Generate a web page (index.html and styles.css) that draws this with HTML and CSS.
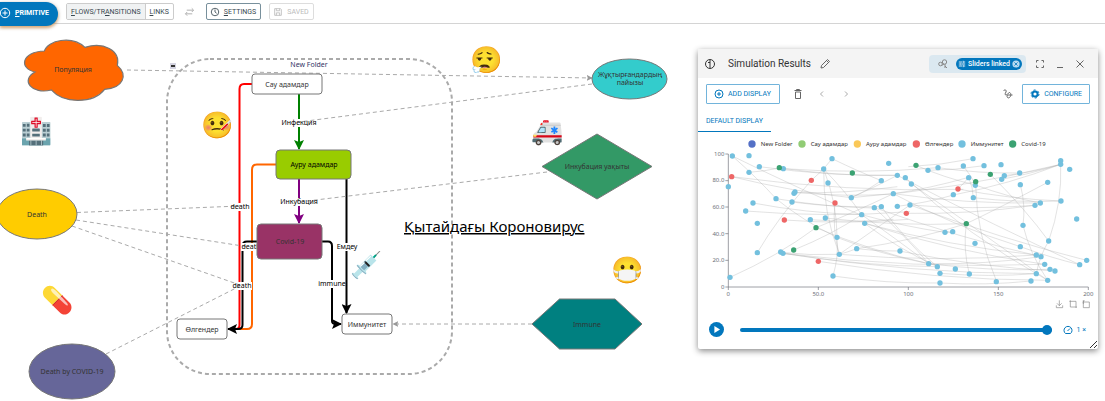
FILE: index.html
```html
<!DOCTYPE html>
<html lang="kk">
<head>
<meta charset="utf-8">
<title>Қытайдағы Короновирус</title>
<link rel="stylesheet" href="styles.css">
</head>
<body>
<header class="topbar">
  <button class="primitive"><svg class="ico" viewBox="0 0 12 12"><circle cx="5" cy="6" r="4.700"/><path d="M5 3.500v5M2.500 6h5"/></svg><span><u>P</u>RIMITIVE</span></button>
  <div class="group">
    <button class="seg seg-on"><u>F</u>LOWS/TR<u>A</u>NSITIONS</button><button class="seg"><u>L</u>INKS</button>
  </div>
  <button class="swap" aria-label="Reverse"><svg viewBox="0 0 12 10"><path d="M3 3h7M8.500 1l2 2-2 2M9 7H2M3.500 5l-2 2 2 2"/></svg></button>
  <button class="box"><svg class="ico" viewBox="0 0 12 12"><circle cx="6" cy="6" r="4.500"/><path d="M6 3v3l2 1.500"/></svg><span><u>S</u>ETTINGS</span></button>
  <button class="box saved" disabled><svg class="ico" viewBox="0 0 12 12"><path d="M2 2h7l1 1v7H2zM4 2v2.500h4V2M4 10V7h4v3"/></svg><span>SAVED</span></button>
</header>
<main class="canvas">
  <svg class="diagram" role="img" aria-label="Model diagram">
    <defs>
      <marker id="a-black" viewBox="0 0 10 10" refX="9" refY="5" markerWidth="10" markerHeight="10" markerUnits="userSpaceOnUse" orient="auto"><path d="M0 0L10 5L0 10L2 5z"/></marker>
      <marker id="a-green" viewBox="0 0 10 10" refX="9" refY="5" markerWidth="10" markerHeight="10" markerUnits="userSpaceOnUse" orient="auto"><path d="M0 0L10 5L0 10L2 5z" fill="#008000"/></marker>
      <marker id="a-purple" viewBox="0 0 10 10" refX="9" refY="5" markerWidth="10" markerHeight="10" markerUnits="userSpaceOnUse" orient="auto"><path d="M0 0L10 5L0 10L2 5z" fill="#800080"/></marker>
      <marker id="a-gray" viewBox="0 0 10 10" refX="9" refY="5" markerWidth="6" markerHeight="6" markerUnits="userSpaceOnUse" orient="auto"><path d="M0 0L10 5L0 10L2 5z" fill="#999"/></marker>
    </defs>
    <g transform="translate(0 -24)">
      <rect class="folder" x="167" y="59" width="285" height="315" rx="43"/>
      <rect x="170" y="63" width="6" height="6" fill="#d5d5e2"/><path d="M171 66h4" stroke="#333" stroke-width="2"/>
      <text class="t folder-name" x="309" y="67">New Folder</text>

      <path class="flow" stroke="#f00" d="M252 84H244Q239.500 84 239.500 89V325Q239.500 329 236 329H232"/>
      <path class="flow" stroke="#f60" d="M276 164.500H257Q252 164.500 252 170V324Q252 329 247 329H232"/>
      <path class="flow" stroke="#008000" marker-end="url(#a-green)" d="M299 94V149"/>
      <path class="flow" stroke="#800080" marker-end="url(#a-purple)" d="M299 179V223"/>
      <path class="flow" stroke="#000" marker-end="url(#a-black)" d="M346.500 179V313"/>
      <path class="flow" stroke="#000" marker-end="url(#a-black)" d="M257 241.500H247Q242.500 241.500 242.500 246V325Q242.500 329 238 329H228"/>
      <path class="flow" stroke="#000" marker-end="url(#a-black)" d="M322 241.500H328Q332 241.500 332 246V321Q332 324 336 324H341"/>
      <g fill="#fff"><rect x="230" y="203" width="19" height="8"/><rect x="241" y="243" width="18" height="8"/><rect x="233" y="282" width="19" height="8"/><rect x="320" y="280" width="24" height="8"/><rect x="336" y="243" width="21" height="8"/><rect x="281" y="119" width="36" height="8"/><rect x="281" y="198" width="36" height="8"/></g>
      <g class="links">
        <path marker-end="url(#a-gray)" d="M127 70L592 78"/><path d="M592 84L299 122"/><path d="M547 172L299 202"/>
        <path d="M77 212.500L240 206"/><path d="M76 220L249 247"/><path d="M72 226L240 285"/><path d="M106 354L240 286"/>
        <path marker-end="url(#a-gray)" d="M532 324H393"/>
      </g>
      <g class="t label"><text x="240" y="209">death</text><text x="251" y="249">death</text><text x="242" y="288">death</text><text x="332" y="286">immune</text><text x="347" y="249">Емдеу</text><text x="299" y="125">Инфекция</text><text x="299" y="204">Инкубация</text></g>

      <g class="shape">
        <path fill="#f60" stroke-width="3.500" transform="scale(.3333)" d="M133 153C143 121 215 105 255 142C310 125 362 150 352 196C385 225 370 265 314 268C280 312 190 312 154 270C95 285 60 240 105 216C55 205 65 155 133 153Z"/>
        <ellipse fill="#fc0" cx="37" cy="214" rx="40" ry="25"/>
        <ellipse fill="#669" cx="72" cy="371.500" rx="43" ry="27.500"/>
        <ellipse fill="#3cc" cx="629.500" cy="79" rx="37.500" ry="20"/>
        <path fill="#396" d="M542 166.500L597 134L652 166.500L597 199Z"/>
        <path fill="#008080" d="M532 324L559.500 299H615L642 324L615 349H559.500Z"/>
        <rect fill="#fff" x="252" y="74" width="70" height="20" rx="3"/>
        <rect fill="#9c0" x="276" y="150" width="75" height="29" rx="4"/>
        <rect fill="#936" x="257" y="224" width="65" height="35" rx="4"/>
        <rect fill="#fff" x="177" y="319" width="50" height="20" rx="3"/>
        <rect fill="#fff" x="342" y="314" width="50" height="20" rx="3"/>
      </g>
      <g class="t"><text x="73" y="72">Популяция</text><text x="37" y="217">Death</text><text x="72" y="374">Death by COVID-19</text><text x="630" y="77">Жұқтырғандардың</text><text x="630" y="85">пайызы</text><text x="597" y="169">Инкубация уақыты</text><text x="587" y="327">Immune</text><text x="287" y="87">Сау адамдар</text><text class="dark" x="314" y="167">Ауру адамдар</text><text x="290" y="244">Covid-19</text><text x="202" y="332">Өлгендер</text><text x="367" y="327">Иммунитет</text></g>
      <text class="headline" x="404" y="232">Қытайдағы Короновирус</text>
      <g class="emoji"><text x="37" y="140">🏥</text><text x="218" y="134">🤒</text><text x="487" y="69">😮‍💨</text><text x="548" y="140">🚑</text><text x="58" y="309">💊</text><text x="367" y="274">💉</text><text x="628" y="279">😷</text></g>
    </g>
  </svg>

  <section class="panel">
    <div class="panel-head">
      <svg class="ico" viewBox="0 0 12 12"><circle cx="6" cy="6" r="4.500"/><path d="M4 4.500h2M6 2v8"/></svg>
      <h2>Simulation Results</h2>
      <button class="bare" aria-label="Rename"><svg class="ico" viewBox="0 0 12 12"><path d="M2 10l.5-2.500 6-6 2 2-6 6zM7.500 2.500l2 2"/></svg></button>
      <div class="linked"><svg class="ico" viewBox="0 0 12 12"><circle cx="7.500" cy="4" r="2.200"/><circle cx="3.500" cy="6" r="1.800"/><path d="M8 6v4M8 8l2 2M4.500 7.500L7 6"/></svg>
        <button class="chip"><svg viewBox="0 0 10 10"><path d="M1 2.500h4M7 2.500h2M6.500 1v3M1 5h1.500M4.500 5H9M3.500 3.500v3M1 7.500h4M7 7.500h2M6.500 6v3"/></svg><span>Sliders linked</span><svg viewBox="0 0 10 10"><circle cx="5" cy="5" r="4.500" fill="#b9dcf2" stroke="none"/><path stroke="#0277bd" d="M3 3l4 4M7 3l-4 4"/></svg></button></div>
      <button class="bare" aria-label="Full screen"><svg class="ico" viewBox="0 0 12 12"><path d="M2.500 4.500v-2h2M7.500 2.500h2v2M9.500 7.500v2h-2M4.500 9.500h-2v-2"/></svg></button>
      <button class="bare" aria-label="Minimize"><svg class="ico" viewBox="0 0 12 12"><path d="M3 9.500h6"/></svg></button>
      <button class="bare" aria-label="Close"><svg class="ico" viewBox="0 0 12 12"><path d="M2.500 2.500l7 7M9.500 2.500l-7 7"/></svg></button>
    </div>
    <div class="tools">
      <button class="outline"><svg class="ico" viewBox="0 0 12 12"><circle cx="5" cy="6" r="4"/><path d="M5 4v4M3 6h4"/></svg>ADD DISPLAY</button>
      <button class="bare" aria-label="Delete"><svg class="ico" viewBox="0 0 12 12"><path d="M2.500 2.500h7M4.500 2V1.500h3V2M3.500 4v6.500h5V4z"/></svg></button>
      <button class="bare faint" aria-label="Previous"><svg class="ico" viewBox="0 0 12 12"><path d="M7 3.500L4.500 6 7 8.500"/></svg></button>
      <button class="bare faint" aria-label="Next"><svg class="ico" viewBox="0 0 12 12"><path d="M5 3.500L7.500 6 5 8.500"/></svg></button>
      <button class="bare push" aria-label="Trace"><svg class="ico" viewBox="0 0 12 12"><path d="M1.500 3C2.500 1 5 2 4 4S2.500 6.500 4 7 6 4.500 7.500 4.500 9.500 8 7.500 9.500 4 8 6 7H10.500"/></svg></button>
      <button class="outline configure"><svg class="ico" viewBox="0 0 12 12"><circle cx="6" cy="6" r="4" stroke-dasharray="2.200 2"/><circle cx="6" cy="6" r="2.600" stroke-width="2"/></svg>CONFIGURE</button>
    </div>
    <div class="tabs"><button class="tab">DEFAULT DISPLAY</button></div>
    <svg class="chart" viewBox="24 6 1200 534" role="img" aria-label="Scatter chart">
      <g id="legend"></g>
      <path class="axis" d="M115 72V471H1195M106 72h9M106 152h9M106 231h9M106 311h9M106 391h9M106 471h9M115 471v9M385 471v9M655 471v9M925 471v9M1195 471v9"/>
      <g class="ticks" text-anchor="end"><text x="103" y="78">100</text><text x="103" y="157">80.0</text><text x="103" y="237">60.0</text><text x="103" y="317">40.0</text><text x="103" y="397">20.0</text><text x="103" y="476">0</text></g>
      <g class="ticks" text-anchor="middle"><text x="115" y="497">0</text><text x="385" y="497">50.0</text><text x="655" y="497">100</text><text x="925" y="497">150</text><text x="1195" y="497">200</text></g>
      <g id="curves"></g>
      <g id="dots"></g>
      <path class="export" d="M1108 511v16M1101 520l7 7 7-7M1099 526v7h19v-7M1141 511v20h20M1138 514h20v20M1180 516h18v17h-18zM1180 510v12M1184 512l-6 4"/>
    </svg>
    <div class="player">
      <button class="play" aria-label="Play"><svg viewBox="0 0 14 14"><circle cx="7" cy="7" r="7" fill="#0277bd"/><path fill="#fff" d="M5 3.800L10.300 7 5 10.200z"/></svg></button>
      <input class="time" type="range" min="0" max="200" value="200" aria-label="Time">
      <button class="speed"><svg class="ico" viewBox="0 0 12 12"><path d="M3.500 9.500A4 4 0 1 1 8.500 9.500zM5.500 7L8 4.500"/></svg>1 ×</button>
    </div>
    <svg class="grip" viewBox="0 0 8 8"><path d="M1 8L8 1M5 8l3-3"/></svg>
  </section>
</main>
<script src="chart.js"></script>
</body>
</html>
```
FILE: styles.css
```css
* { box-sizing: border-box; }
body { margin: 0; min-height: 100vh; display: flex; flex-direction: column; background: #fff; font-family: Roboto, "Liberation Sans", sans-serif; font-size: 7px; overflow: hidden; }
button { font: inherit; margin: 0; padding: 0; border: 0; background: none; color: inherit; display: flex; align-items: center; }
svg { display: block; }
u { text-underline-offset: 1px; }
.ico { width: 12px; height: 12px; flex: none; fill: none; stroke: currentColor; stroke-width: 1; }

.topbar { height: 24px; flex: none; display: flex; align-items: center; border-bottom: 1px solid #d4d4d4; color: #37474f; position: relative; z-index: 1; }
.primitive { height: 24px; width: 58px; gap: 3px; padding-bottom: 1px; margin: 4px 8px 0 0; color: #fff; background: #0277bd; border-radius: 0 12px 12px 0; font-weight: 700; box-shadow: 0 2px 3px #e0903c99, 0 1px 4px #0004; }
.group { display: flex; height: 17px; border: 1px solid #ccc; border-radius: 2px; }
.seg { padding: 0 4px; }
.seg-on { background: #f0f2f3; border-right: 1px solid #ccc; }
.swap { margin: 0 11px 0 10px; }
.swap svg { width: 11px; height: 10px; fill: none; stroke: #aaa; }
.box { height: 17px; padding: 0 4px 0 2px; gap: 3px; border: 1px solid #78909c; border-radius: 2px; margin-right: 8px; }
.box .ico { width: 12px; height: 10px; }
.saved { color: #bbb; border-color: #ddd; }

.canvas { flex: 1; position: relative; min-height: 377px; }
.diagram { position: absolute; inset: 0; width: 100%; height: 100%; }
.folder { fill: none; stroke: #aaa; stroke-width: 2; stroke-dasharray: 4 3; }
.flow { fill: none; stroke-width: 2; }
.links { fill: none; stroke: #aaa; stroke-width: 1; stroke-dasharray: 4 3; }
.shape { stroke: #777; stroke-width: 1; }
.t { font-family: "Noto Sans", sans-serif; font-size: 7px; text-anchor: middle; fill: #333; }
.label, .dark { fill: #000; }
.folder-name { fill: #336; }
.headline { font-family: "Noto Sans", sans-serif; font-size: 15px; text-decoration: underline; text-underline-offset: 1px; fill: #000; }
.emoji { font-family: "Noto Color Emoji", sans-serif; font-size: 26px; text-anchor: middle; }

.panel { position: absolute; top: 25px; right: 7px; width: 400px; background: #fff; border-radius: 2px; box-shadow: 0 2px 6px #0007; color: #666; }
.panel-head { height: 29px; display: flex; align-items: center; background: #f4f4f4; padding: 0 12px 0 6px; color: #333; gap: 8px; }
.panel-head h2 { margin: 0 0 0 4px; font-size: 10px; font-weight: 400; }
.panel-head .bare { color: #666; }
.linked { display: flex; align-items: center; gap: 7px; height: 18px; padding: 0 4px 0 8px; margin-left: auto; background: #dbe8f0; border-radius: 4px; color: #888; }
.chip { height: 12px; padding: 0 2px; gap: 2px; background: #0277bd; color: #fff; border-radius: 6px; font-weight: 500; white-space: nowrap; }
.chip svg { width: 8px; height: 8px; fill: none; stroke: #fff; }
.tools { height: 32px; padding: 0 8px; display: flex; align-items: center; gap: 8px; }
.outline { height: 20px; padding: 0 8px 0 7px; gap: 2px; color: #0277bd; border: 1px solid #72b4db; border-radius: 1px; }
.configure { gap: 3px; padding: 0 7px 0 6px; }
.tools .bare { margin-left: 4px; }
.tools .push { margin-left: auto; }
.tools .faint { color: #aaa; }
.tabs { display: flex; }
.tab { height: 22px; padding: 0 8px; color: #0277bd; border-bottom: 1px solid #0277bd; }
.chart { width: 100%; height: auto; font-family: "Noto Sans", sans-serif; font-size: 18px; fill: #333; }
.axis { fill: none; stroke: #6e7079; stroke-width: 2; }
.ticks { fill: #6e7079; }
#curves { fill: none; stroke: #aaa; stroke-opacity: .5; stroke-width: 2; }
.export { fill: none; stroke: #888; stroke-width: 2; }
.player { height: 39px; display: flex; align-items: center; padding: 0 12px 0 11px; gap: 10px; }
.play, .play svg { width: 15px; height: 15px; }
.time { flex: 1; min-width: 0; height: 12px; margin: 0 0 0 6px; appearance: none; background: none; }
.time::-webkit-slider-runnable-track { height: 4px; border-radius: 2px; background: #0277bd; }
.time::-webkit-slider-thumb { appearance: none; width: 10px; height: 10px; margin-top: -3px; border-radius: 50%; background: #0277bd; }
.speed { gap: 3px; color: #0277bd; white-space: nowrap; }
.grip { position: absolute; right: 1px; bottom: 1px; width: 8px; height: 8px; stroke: #333; stroke-width: 1; }
```
FILE: chart.js
```js
const NS = "http://www.w3.org/2000/svg";
function add(parent, tag, attrs, text) {
  const el = document.createElementNS(NS, tag);
  for (const key in attrs) el.setAttribute(key, attrs[key]);
  if (text) el.textContent = text;
  document.getElementById(parent).appendChild(el);
}

const legend = [
  [186, "#5470c6", "New Folder"], [336, "#91cc75", "Сау адамдар"], [502, "#fac858", "Ауру адамдар"],
  [679, "#ee6666", "Өлгендер"], [816, "#73c0de", "Иммунитет"], [968, "#3ba272", "Covid-19"]
];
for (const [x, fill, name] of legend) {
  add("legend", "circle", { cx: x, cy: 42, r: 11, fill });
  add("legend", "text", { x: x + 26, y: 48 }, name);
}

const curves = [
  [127,78,258,206],[258,206,440,322],[127,78,524,260],[440,322,716,401],[125,140,484,203],[125,140,820,178],[177,127,268,114],
  [268,114,622,136],[280,116,744,113],[655,110,849,86],[208,110,622,136],[312,188,622,170],[315,187,610,192],[306,216,574,230],
  [258,206,552,234],[189,219,515,254],[167,243,660,245],[283,270,655,268],[202,368,364,151],[364,151,426,86],[426,86,574,152],
  [401,117,448,373],[401,117,441,322],[435,219,448,373],[441,322,429,438],[120,442,378,293],[378,293,610,191],
  [272,367,448,373],[279,370,1039,431],[279,370,1064,403],[279,370,742,410],[311,360,515,254],[385,394,1073,451],[429,438,750,459],
  [448,373,500,356],[500,356,829,281],[448,373,660,225],[500,356,628,363],[361,269,610,268],[406,264,829,281],[401,117,515,254],
  [484,203,574,152],[484,203,622,136],[378,293,716,401],[515,254,716,401],[524,280,742,410],[553,233,716,401],[574,230,742,410],
  [610,191,836,142],[622,229,790,195],[622,136,1169,404],[646,143,1073,451],[664,162,1073,451],[678,106,856,165],[714,121,882,107],
  [744,113,989,129],[820,108,857,165],[857,165,920,455],[836,142,804,177],[857,165,1051,219],[850,203,1113,213],[660,225,1035,226],
  [649,250,1035,226],[610,191,1051,219],[804,177,1113,213],[790,195,1112,103],[902,134,1076,333],[829,281,838,432],
  [829,281,1073,157],[765,307,788,305],[515,254,765,307],[524,280,1039,375],[553,233,1053,380],[524,280,1064,403],
  [628,363,1095,423],[716,401,1080,418],[750,430,1039,431],[750,459,1024,453],[991,164,999,286],[999,286,1073,451],
  [1112,103,1076,333],[1076,333,1039,431],[934,148,1112,103],[943,137,1112,103],[660,225,1190,391],[610,191,991,350],
  [991,350,1169,404],[716,401,1053,380],[836,142,850,203],[484,203,1112,103],[448,373,1039,375]
];
curves.forEach(([x1, y1, x2, y2], i) => {
  const bend = i % 2 ? 0.1 : -0.1;
  const cx = (x1 + x2) / 2 - (y2 - y1) * bend;
  const cy = (y1 + y2) / 2 + (x2 - x1) * 0.04;
  add("curves", "path", { d: `M${x1} ${y1}Q${cx} ${cy} ${x2} ${y2}` });
});

const groups = {
  "#73c0de": [
    [127,78],[177,77],[115,170],[177,127],[208,110],[280,116],[258,206],[312,190],[315,186],[306,216],[189,219],[167,243],[202,280],
    [202,368],[120,442],[272,366],[279,370],[361,269],[406,264],[426,86],[401,117],[414,159],[441,322],[448,373],[429,438],[500,356],
    [484,203],[515,254],[524,280],[553,233],[574,230],[574,152],[596,100],[610,191],[622,136],[622,229],[630,363],[646,143],[664,162],
    [660,225],[714,121],[744,113],[716,401],[742,410],[750,430],[750,459],[796,417],[838,432],[765,307],[788,305],[790,194],[820,108],
    [849,86],[836,143],[856,166],[850,203],[882,107],[933,104],[943,137],[935,148],[989,129],[991,164],[855,340],[919,455],[999,286],
    [991,350],[1039,375],[1053,380],[1064,403],[1080,418],[1095,423],[1039,431],[1023,453],[1073,451],[1076,333],[1035,226],[1051,219],
    [1113,213],[1073,157],[1112,92],[1112,103],[1139,118],[1160,267],[1190,391],[1169,404]
  ],
  "#ee6666": [[125,140],[364,151],[435,219],[283,270],[385,394],[649,250],[804,177]],
  "#3ba272": [[268,113],[487,129],[378,293],[311,360],[678,106],[857,155],[901,133],[829,281]]
};
for (const fill in groups)
  for (const [cx, cy] of groups[fill]) add("dots", "circle", { cx, cy, r: 8, fill });
```
